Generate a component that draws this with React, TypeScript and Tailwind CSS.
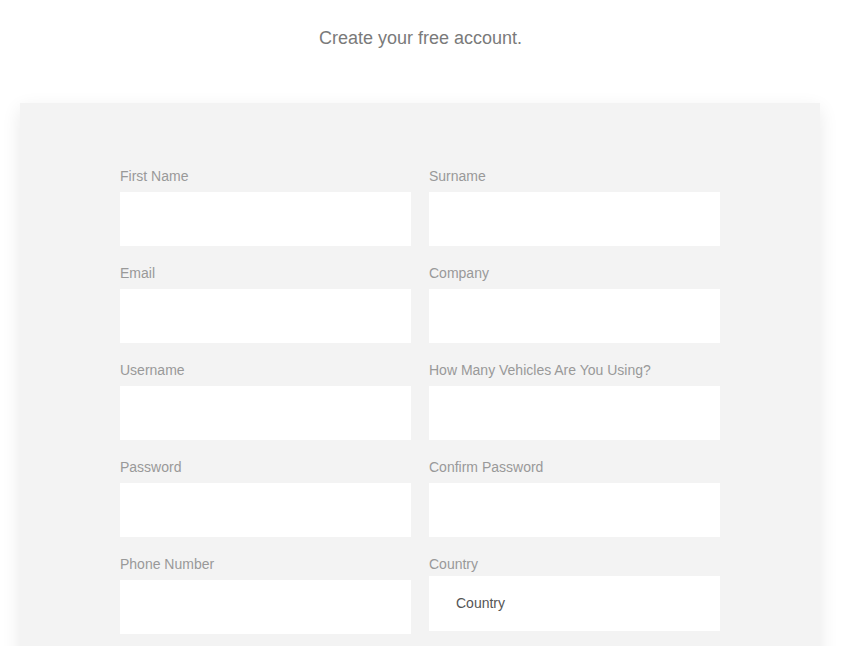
import React from 'react';

type Field = { label: string; type?: string };

const leftFields: Field[] = [
  { label: 'First Name' },
  { label: 'Email', type: 'email' },
  { label: 'Username' },
  { label: 'Password', type: 'password' },
  { label: 'Phone Number', type: 'tel' },
];

const rightFields: Field[] = [
  { label: 'Surname' },
  { label: 'Company' },
  { label: 'How Many Vehicles Are You Using?' },
  { label: 'Confirm Password', type: 'password' },
];

const TextField: React.FC<Field> = ({ label, type = 'text' }) => (
  <label className="flex flex-col">
    <span className="h-4 text-[14px] leading-4 text-[#999999]">{label}</span>
    <input type={type} className="mt-2 h-[54px] w-full bg-white px-4 text-[14px] text-[#555] outline-none" />
  </label>
);

export default function App() {
  return (
    <div className="min-h-screen bg-white font-['Liberation_Sans',Arial,sans-serif]">
      <h1 className="pt-[27px] text-center text-[18px] leading-[22px] text-[#7a7a7a]">
        Create your free account.
      </h1>

      <div className="ml-5 mt-[54px] w-[800px] bg-[#f3f3f3] px-[100px] pt-[65px] pb-10 shadow-[0_6px_18px_rgba(0,0,0,0.09)]">
        <form className="grid grid-cols-2 gap-x-[18px]">
          <div className="flex flex-col gap-[19px]">
            {leftFields.map((f) => (
              <TextField key={f.label} {...f} />
            ))}
          </div>
          <div className="flex flex-col gap-[19px]">
            {rightFields.map((f) => (
              <TextField key={f.label} {...f} />
            ))}
            <label className="flex flex-col">
              <span className="h-4 text-[14px] leading-4 text-[#999999]">Country</span>
              <div className="mt-1 flex h-[55px] items-center bg-white pl-[27px] text-[14px] text-[#555]">
                Country
              </div>
            </label>
          </div>
        </form>
      </div>
    </div>
  );
}
